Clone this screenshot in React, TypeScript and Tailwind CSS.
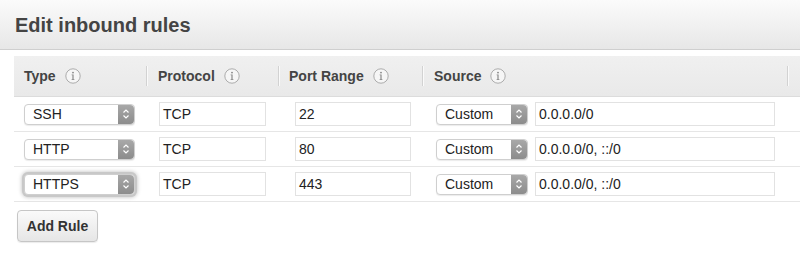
import React from 'react';

const font = { fontFamily: '"Liberation Sans", Arial, Helvetica, sans-serif' };

function InfoIcon() {
  return (
    <svg width="16" height="16" viewBox="0 0 16 16" className="ml-[9px]">
      <circle cx="8" cy="8" r="7.2" fill="#f6f6f6" stroke="#acacac" strokeWidth="1" />
      <circle cx="8" cy="4.6" r="0.95" fill="#8a8a8a" />
      <path d="M6.6 6.6 H8.6 V11.2 H9.4 V11.9 H6.6 V11.2 H7.4 V7.3 H6.6 Z" fill="#8a8a8a" />
    </svg>
  );
}

function Arrows() {
  return (
    <div className="flex h-full w-[16px] items-center justify-center rounded-r-[4px] bg-gradient-to-b from-[#a8a8a8] to-[#8c8c8c]">
      <svg width="8" height="12" viewBox="0 0 8 12">
        <path d="M1.5 4.5 L4 2 L6.5 4.5" fill="none" stroke="#fff" strokeWidth="1.2" />
        <path d="M1.5 7.5 L4 10 L6.5 7.5" fill="none" stroke="#fff" strokeWidth="1.2" />
      </svg>
    </div>
  );
}

function Select({ value, width, focus }: { value: string; width: string; focus?: boolean }) {
  return (
    <div
      className={`flex h-[21px] items-center justify-between rounded-[4px] border border-[#cfcfcf] bg-white ${width} ${
        focus ? 'shadow-[0_0_0_2px_#c8c8c8,0_0_4px_2px_#bbbbbb]' : 'shadow-[0_1px_1px_rgba(0,0,0,0.08)]'
      }`}
    >
      <span className="pl-[8px] text-[14px] text-[#222]">{value}</span>
      <Arrows />
    </div>
  );
}

function Input({ value, width }: { value: string; width: string }) {
  return (
    <div className={`flex h-[24px] items-center border border-[#e2e2e2] bg-white pl-[3px] text-[14px] text-[#222] ${width}`}>
      {value}
    </div>
  );
}

function HeadCell({ label, width, pad }: { label: string; width: string; pad: string }) {
  return (
    <div className={`flex h-full items-center ${width} ${pad}`}>
      <span className="text-[14px] font-bold text-[#444]">{label}</span>
      <InfoIcon />
    </div>
  );
}

function Sep() {
  return <div className="h-[20px] w-[2px] shrink-0 border-l border-r border-l-[#d2d2d2] border-r-[#fafafa]" />;
}

const rows = [
  { type: 'SSH', port: '22', source: '0.0.0.0/0' },
  { type: 'HTTP', port: '80', source: '0.0.0.0/0, ::/0' },
  { type: 'HTTPS', port: '443', source: '0.0.0.0/0, ::/0', focus: true },
];

export default function App() {
  return (
    <div className="h-[253px] w-[800px] overflow-hidden bg-white" style={font}>
      {/* Title */}
      <div className="flex h-[50px] items-center border-b border-[#cfcfcf] bg-gradient-to-b from-[#fbfbfb] to-[#e7e7e7] pl-[15px]">
        <h1 className="text-[20px] font-bold text-[#444]">Edit inbound rules</h1>
      </div>

      <div className="pl-[14px] pt-[6px]">
        {/* Header */}
        <div className="flex h-[41px] w-[800px] items-center border-b border-[#dcdcdc] bg-gradient-to-b from-[#f0f0f0] to-[#e9e9e9]">
          <HeadCell label="Type" width="w-[132px]" pad="pl-[10px]" />
          <Sep />
          <HeadCell label="Protocol" width="w-[130px]" pad="pl-[10px]" />
          <Sep />
          <HeadCell label="Port Range" width="w-[142px]" pad="pl-[9px]" />
          <Sep />
          <HeadCell label="Source" width="w-[363px]" pad="pl-[10px]" />
          <Sep />
        </div>

        {/* Rows */}
        {rows.map((r) => (
          <div key={r.type} className="flex h-[35px] w-[800px] items-center border-b border-[#e6e6e6]">
            <div className="w-[145px] pl-[10px]">
              <Select value={r.type} width="w-[111px]" focus={r.focus} />
            </div>
            <Input value="TCP" width="w-[107px]" />
            <div className="w-[29px]" />
            <Input value={r.port} width="w-[116px]" />
            <div className="w-[25px]" />
            <Select value="Custom" width="w-[92px]" />
            <div className="w-[7px]" />
            <Input value={r.source} width="w-[240px]" />
          </div>
        ))}
      </div>

      {/* Add rule */}
      <div className="pl-[17px] pt-[8px]">
        <button className="h-[32px] w-[81px] rounded-[4px] border border-[#c6c6c6] bg-gradient-to-b from-[#fafafa] to-[#e6e6e6] text-[14px] font-bold text-[#333] shadow-[0_1px_1px_rgba(0,0,0,0.08)]">
          Add Rule
        </button>
      </div>
    </div>
  );
}
